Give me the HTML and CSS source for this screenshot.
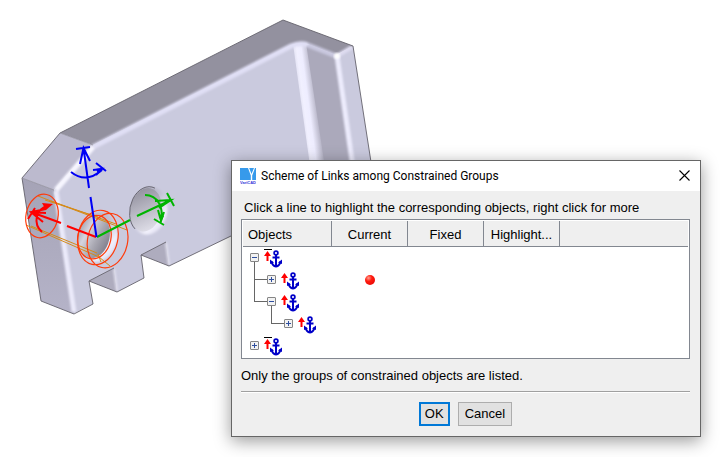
FILE: index.html
```html
<!DOCTYPE html>
<html lang="en">
<head>
<meta charset="utf-8">
<title>Scheme of Links among Constrained Groups</title>
<link rel="stylesheet" href="styles.css">
</head>
<body>
<main class="workspace">
<svg class="model" width="400" height="340" viewBox="0 0 400 340" aria-hidden="true">
  <defs>
    <linearGradient id="side" x1="0" y1="0" x2="0" y2="1"><stop offset="0" stop-color="#a5a3b6"/><stop offset="1" stop-color="#b5b3c8"/></linearGradient>
    <linearGradient id="bore" x1="0" y1=".2" x2="1" y2=".6"><stop offset="0" stop-color="#a09eac"/><stop offset=".3" stop-color="#d5d4de"/><stop offset=".65" stop-color="#a9a8b2"/><stop offset="1" stop-color="#84828f"/></linearGradient>
    <linearGradient id="bore2" x1=".1" y1="0" x2=".6" y2="1"><stop offset="0" stop-color="#8c8a98"/><stop offset=".5" stop-color="#b5b4c0"/><stop offset="1" stop-color="#dddce6"/></linearGradient>
    <linearGradient id="rim" x1="0" y1="0" x2="1" y2=".8"><stop offset="0" stop-color="#a5a3b3"/><stop offset=".5" stop-color="#c4c3d6"/><stop offset=".8" stop-color="#f2f1fc"/><stop offset="1" stop-color="#dddcf0"/></linearGradient>
    <linearGradient id="fillet" gradientUnits="userSpaceOnUse" x1="294" y1="100" x2="317" y2="97"><stop offset="0" stop-color="#cacade"/><stop offset=".4" stop-color="#f1f0ff"/><stop offset=".6" stop-color="#eeedff"/><stop offset="1" stop-color="#aba9bb"/></linearGradient>
    <filter id="soft" x="-10%" y="-10%" width="120%" height="120%"><feGaussianBlur stdDeviation=".8"/></filter>
  </defs>
  <path fill="#cacade" d="M54 190 93 145 290 44 336 56 353 46 380 220 231 236 169 266 166 242 141 255 144 278 117 292 114 268 89 281 93 304 73 314Z"/>
  <path fill="#aba9bb" d="M305 44 337 56 356 180 323 180Z"/>
  <path fill="url(#fillet)" d="M293 44 306 43 327 180 312 180Z"/>
  <path fill="#93919f" d="M60 133 283 20 353 46 336 55 308 44Q300 42 291 45L93 145Z"/>
  <path fill="#bcbace" d="M60 133 22 178 54 190 93 145Z"/>
  <path fill="url(#side)" d="M22 178 54 190 74 314 41 301Z"/>
  <path fill="#aeacbe" d="M89 281 114 268 117 292ZM141 255 166 242 169 266Z"/>
  <g fill="none" filter="url(#soft)">
    <path stroke="#e0dff5" stroke-width="5" d="M93 147 291 46Q300 42 308 45"/>
    <path stroke="#c9c8df" stroke-width="5" d="M308 45 336 56"/>
    <path stroke="#dedcf0" stroke-width="4" d="M337 56 352 47"/>
    <path stroke="#edecfd" stroke-width="5" d="M337 56 353 168"/>
    <path stroke="#ebeafa" stroke-width="5" d="M56 191 74 312"/>
    <path stroke="#f7f6ff" stroke-width="5" d="M56 190 93 147"/>
    <path stroke="#e3e2f0" stroke-width="2" d="M114 269 117 291M166 243 169 265"/>
  </g>
  <circle cx="337" cy="56" r="3" fill="#fff" filter="url(#soft)"/>
  <path fill="none" stroke="#64626c" stroke-width=".9" d="M380 220 353 46 283 20 60 133 22 178 41 301 74 314 93 304 89 281 114 268M89 281 117 292 144 278 141 255 166 242M141 255 169 266 231 236"/>
  <path fill="none" stroke="#8d8b98" stroke-width=".7" d="M22 178 54 190M60 133 93 145"/>
  <g transform="rotate(12 147 211)">
    <ellipse cx="149" cy="210.500" rx="18" ry="24" fill="url(#rim)" filter="url(#soft)"/>
    <ellipse cx="145.500" cy="210" rx="15.500" ry="22" fill="url(#bore2)"/>
    <path fill="none" stroke="#64626c" stroke-width=".9" d="M150 187A17 23.500 0 0 0 139 231"/>
  </g>
  <g transform="rotate(12 97 237)">
    <ellipse cx="98" cy="237" rx="19.500" ry="24.500" fill="url(#rim)" filter="url(#soft)"/>
    <ellipse cx="94" cy="237" rx="15.500" ry="22" fill="url(#bore)"/>
  </g>
  <g fill="none" stroke="#d58b19" stroke-width="1">
    <path d="M38 196 127 230M45 200 98 217M26 225 99 257 110 266M31 226 97 253M51 201 116 224M98 254 101 262"/>
  </g>
  <g fill="none" stroke="#ff3b0b" stroke-width="1.200">
    <ellipse cx="42" cy="216" rx="16" ry="22" transform="rotate(12 42 216)"/>
    <ellipse cx="94.500" cy="237" rx="16.500" ry="22" transform="rotate(12 94 237)"/>
    <ellipse cx="98" cy="237.500" rx="20" ry="27.500" transform="rotate(12 98 237)"/>
    <ellipse cx="107.500" cy="240.500" rx="20" ry="27.500" transform="rotate(12 107 241)"/>
  </g>
  <g fill="none" stroke="#f00" stroke-width="2">
    <path d="M96 237 67 226M61 223 31 212M28 219 35 208M46 209 31 212 43 222M31 212 46 213M42 232C33 224 35 209 48 206"/>
    <path fill="#f00" stroke="none" d="M42 203 53 204 46 210Z"/>
  </g>
  <g fill="none" stroke="#00b400" stroke-width="2">
    <path d="M97 237 130 220M137 216 171 200M167 193 174 206M155 201 171 200 159 208M145 195C158 195 164 208 161 221M154 219 164 225M158 210 161 221 164 212"/>
    <path fill="#00b400" stroke="none" d="M159 214 164 216 161 222Z"/>
  </g>
  <g fill="none" stroke="#0000f5" stroke-width="2">
    <path d="M96.500 237 90.500 197M89 188 83.500 148M76 149 90 147M80 164 83.500 148 90 161M71 172Q86 184 102 170M96 163 106 171M93 170 102 169 96 175"/>
    <path fill="#0000f5" stroke="none" d="M96 169 102 168 98 174Z"/>
  </g>
</svg>

<svg class="symbols" aria-hidden="true">
  <symbol id="group" viewBox="0 0 20 22">
    <path fill="red" d="M3.500 4 7 9H4.500V14H2.500V9H0Z"/>
    <circle cx="12" cy="6" r="1.900" fill="none" stroke="#0000c8" stroke-width="1.700"/>
    <path fill="none" stroke="#0000c8" stroke-width="2" d="M12 8V20M8.500 10.500H15.500"/>
    <path fill="none" stroke="#0000c8" stroke-width="2" d="M7.500 14.500Q8.500 19 12 19.500 15.500 19 16.500 14.500"/>
    <path fill="#0000c8" d="M6 17V12.500L10 15.500ZM18 17V12.500L14 15.500Z"/>
  </symbol>
  <symbol id="fixed-group" viewBox="0 0 20 22"><path fill="#000" d="M0 2H8V3H0Z"/><use href="#group"/></symbol>
</svg>

<section class="dialog" role="dialog" aria-labelledby="dialog-title">
  <header class="titlebar">
    <svg class="logo" viewBox="0 0 16 16" aria-hidden="true">
      <path fill="#379aeb" d="M0 0H16V12H0Z"/>
      <path fill="#fff" d="M8 0H9.200L11.500 6 14 0H15L12.200 7.500V12H10.800V7.500Z"/>
      <text x="0" y="15.500" font-size="4" font-weight="bold" fill="#3434d8">VariCAD</text>
    </svg>
    <h1 class="title" id="dialog-title">Scheme of Links among Constrained Groups</h1>
    <button class="close" type="button" aria-label="Close"><svg width="11" height="11" viewBox="0 0 11 11"><path fill="none" stroke="#000" stroke-width="1.100" d="M.5.5 10.500 10.500M10.500.5.5 10.500"/></svg></button>
  </header>
  <div class="content">
    <p class="hint">Click a line to highlight the corresponding objects, right click for more</p>
    <div class="list">
      <table class="groups">
        <colgroup><col class="col-objects"><col class="col-state"><col class="col-state"><col class="col-state"><col></colgroup>
        <thead><tr><th class="first">Objects</th><th>Current</th><th>Fixed</th><th>Highlight...</th><th></th></tr></thead>
        <tbody>
          <tr><td><div class="node"><span class="branch open"><button class="toggle minus" type="button" aria-label="Collapse"></button></span><svg class="icon"><use href="#fixed-group"/></svg></div></td><td></td><td></td><td></td><td></td></tr>
          <tr><td><div class="node"><span class="guide tee"></span><span class="branch"><button class="toggle plus" type="button" aria-label="Expand"></button></span><svg class="icon"><use href="#group"/></svg></div></td><td><span class="dot"></span></td><td></td><td></td><td></td></tr>
          <tr><td><div class="node"><span class="guide corner"></span><span class="branch open"><button class="toggle minus" type="button" aria-label="Collapse"></button></span><svg class="icon"><use href="#group"/></svg></div></td><td></td><td></td><td></td><td></td></tr>
          <tr><td><div class="node"><span class="guide"></span><span class="guide corner"></span><span class="branch"><button class="toggle plus" type="button" aria-label="Expand"></button></span><svg class="icon"><use href="#group"/></svg></div></td><td></td><td></td><td></td><td></td></tr>
          <tr><td><div class="node"><span class="branch"><button class="toggle plus" type="button" aria-label="Expand"></button></span><svg class="icon"><use href="#fixed-group"/></svg></div></td><td></td><td></td><td></td><td></td></tr>
        </tbody>
      </table>
    </div>
    <p class="note">Only the groups of constrained objects are listed.</p>
    <hr class="rule">
    <div class="actions">
      <button class="button default" type="button">OK</button>
      <button class="button" type="button">Cancel</button>
    </div>
  </div>
</section>
</main>
</body>
</html>
```
FILE: styles.css
```css
* { box-sizing: border-box; }
body {
  margin: 0;
  background: #fff;
  color: #000;
  font: 13px/16px "Liberation Sans", Arial, sans-serif;
}
.workspace { position: relative; min-height: 100vh; overflow: hidden; }
.model { display: block; }
.symbols { position: absolute; width: 0; height: 0; }

/* Floating dialog window */
.dialog {
  position: absolute;
  top: 160px;
  left: 231px;
  right: 27px;
  border: 1px solid #666;
  background: #efefef;
  box-shadow: 0 4px 16px rgba(0, 0, 0, .4);
}
.titlebar {
  display: flex;
  align-items: center;
  height: 30px;
  padding: 0 8px;
  background: #fff;
}
.logo { width: 16px; height: 16px; margin-right: 5px; }
.title {
  flex: 1;
  margin: 0;
  font: 12px/16px Roboto, "Noto Sans", sans-serif;
}
.close {
  display: flex;
  align-items: center;
  justify-content: center;
  width: 15px;
  height: 20px;
  padding: 0 0 2px;
  border: 0;
  background: none;
}
.content { padding: 9px 10px 10px 9px; }
.hint { margin: 0 0 3px; padding-left: 3px; }

.list {
  height: 140px;
  padding: 1px;
  border: 1px solid #828790;
  background: #fff;
}
.groups { width: 100%; border-collapse: separate; border-spacing: 0; table-layout: fixed; }
.col-objects { width: 89px; }
.col-state { width: 76px; }
.groups th {
  height: 26px;
  padding: 2px 0 0;
  border-right: 1px solid #828790;
  border-bottom: 1px solid #828790;
  background: #efefef;
  font-weight: normal;
  text-align: center;
}
.groups th.first { padding-left: 5px; text-align: left; }
.groups th:last-child { border-right: 0; }
.groups td { height: 22px; padding: 0; }

/* Tree cells: one 17px step per level */
.node { display: flex; height: 22px; padding-left: 3px; }
.guide, .branch { position: relative; width: 17px; height: 22px; }
.guide.tee::before, .guide.corner::before {
  content: "";
  position: absolute;
  left: 8px;
  top: 0;
  width: 1px;
  height: 11px;
  background: #666;
}
.guide.tee::before { height: 22px; }
.guide.tee::after, .guide.corner::after {
  content: "";
  position: absolute;
  left: 8px;
  top: 10px;
  width: 13px;
  height: 1px;
  background: #666;
}
.branch { display: flex; justify-content: center; padding-top: 6px; }
.branch.open::after {
  content: "";
  position: absolute;
  left: 8px;
  top: 15px;
  width: 1px;
  height: 7px;
  background: #666;
}
.toggle {
  width: 9px;
  height: 9px;
  padding: 0;
  border: 1px solid #858585;
  border-radius: 1px;
  background: linear-gradient(#2f4f9f, #2f4f9f) center / 5px 1px no-repeat, #f2f2f2;
}
.toggle.plus {
  background: linear-gradient(#2f4f9f, #2f4f9f) center / 5px 1px no-repeat,
    linear-gradient(#2f4f9f, #2f4f9f) center / 1px 5px no-repeat, #f2f2f2;
}
.icon { width: 20px; height: 22px; margin-left: 1px; }
.dot {
  display: block;
  width: 10px;
  height: 10px;
  margin: 0 auto;
  border-radius: 50%;
  background: radial-gradient(circle at 35% 30%, #ffa090 0, #ff1c10 35%, #e00000 100%);
}

.note { margin: 9px 0 7px; }
.rule {
  margin: 0;
  border: 0;
  border-top: 1px solid #a0a0a0;
  border-bottom: 1px solid #fff;
}
.actions { display: flex; justify-content: center; gap: 8px; padding-top: 9px; }
.button {
  height: 24px;
  padding: 0 6px;
  border: 1px solid #adadad;
  background: #e1e1e1;
  color: #000;
  font: inherit;
}
.button.default { padding: 0 4px; border: 2px solid #0078d7; }
```
